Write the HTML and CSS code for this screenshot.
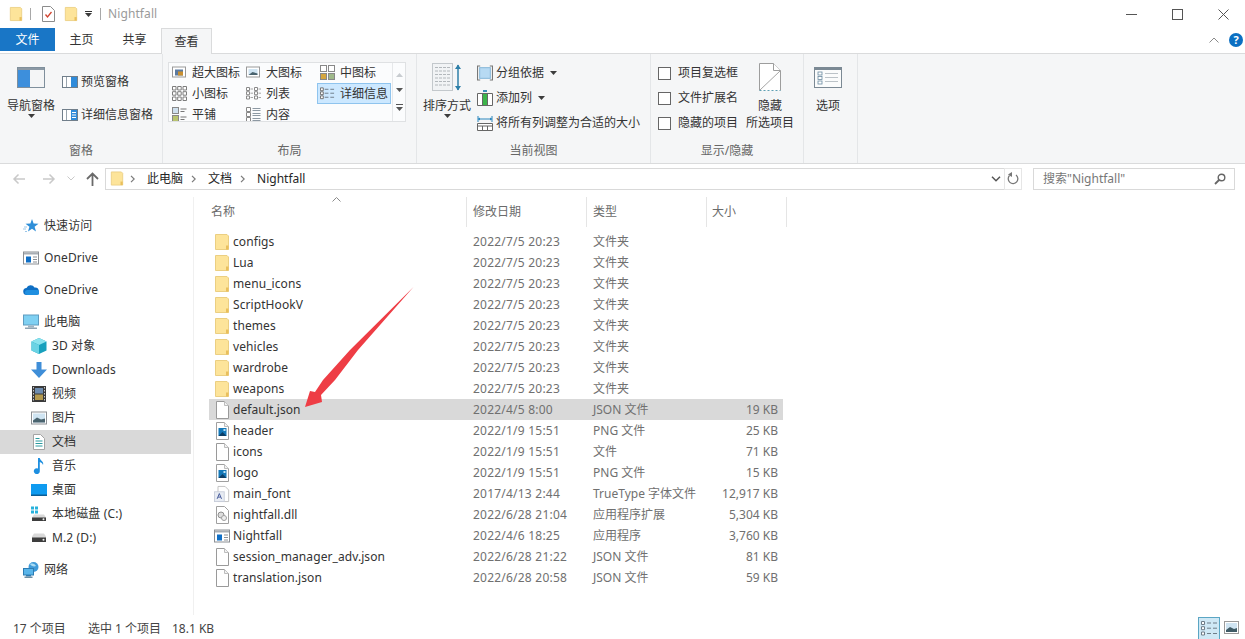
FILE: index.html
```html
<!DOCTYPE html>
<html lang="zh-CN">
<head>
<meta charset="utf-8">
<title>Nightfall</title>
<link rel="stylesheet" href="styles.css">
</head>
<body>
<svg class="defs" width="0" height="0" aria-hidden="true">
  <symbol id="folder" viewBox="0 0 16 18"><path d="M1.500 1.500h11.500l1.500 1.500v13.500h-13z" fill="#fde49a" stroke="#ebcf82"/><path d="M12 12.500h2.500v4H12z" fill="#e9bf5c"/></symbol>
  <symbol id="file" viewBox="0 0 16 18"><path d="M2.500.5h8l4 4v13h-12z" fill="#fff" stroke="#9a9a9a"/><path d="M10.500.5v4h4" fill="#f2f2f2" stroke="#bdbdbd"/></symbol>
  <symbol id="png" viewBox="0 0 16 18"><path d="M2.500.5h8l4 4v13h-12z" fill="#fff" stroke="#a0a0a0"/><path d="M10.500.5v4h4" fill="#f2f2f2" stroke="#bdbdbd"/><rect x="4.500" y="6" width="8" height="8" fill="#1478b8"/><path d="M4.500 14l4-4 4 4z" fill="#0d3e66"/><rect x="9.500" y="7" width="2" height="2" fill="#bfe3f5"/></symbol>
  <symbol id="font" viewBox="0 0 18 18"><path d="M4.500.5h8l4 4v13h-12z" fill="#fff" stroke="#bcbcbc"/><rect x=".5" y="6.500" width="11" height="11" fill="#e8ecf3" stroke="#c6ccd8"/><path d="M3.500 14.500l2.500-6 2.500 6M4.500 12.500h3" fill="none" stroke="#3a4f94"/></symbol>
  <symbol id="dll" viewBox="0 0 16 18"><path d="M2.500.5h8l4 4v13h-12z" fill="#fff" stroke="#a0a0a0"/><circle cx="7" cy="9" r="3" fill="#ddd" stroke="#8f8f8f"/><circle cx="10" cy="12" r="2.500" fill="#eee" stroke="#9f9f9f"/></symbol>
  <symbol id="app" viewBox="0 0 16 13"><rect x=".5" y=".5" width="15" height="12" fill="#fff" stroke="#8b8f94"/><rect x="1" y="1" width="14" height="2" fill="#a8adb3"/><rect x="3" y="5" width="5" height="6" fill="#0f6fc6"/><path d="M10 5.500h4M10 8h4M10 10.500h4" stroke="#8b8f94"/></symbol>
  <symbol id="star" viewBox="0 0 16 16"><path d="M9 1l1.600 4.600 4.900.1-3.900 3 1.400 4.800L9 10.700l-4 2.800 1.400-4.800-3.900-3 4.900-.1z" fill="#2f8fd8"/><path d="M1 9h3M0 11h3M2 13.500h2" stroke="#9bc7e8"/></symbol>
  <symbol id="cloud" viewBox="0 0 16 11"><path d="M4 10.500a3.500 3.500 0 0 1-.5-7A4.500 4.500 0 0 1 11.500 3a3.700 3.700 0 0 1 1 7.500z" fill="#0e6fc4"/><path d="M4 10.500a2.500 2.500 0 0 1 1-5h9a2.500 2.500 0 0 1 0 5z" fill="#1f8fe0"/></symbol>
  <symbol id="pc" viewBox="0 0 16 15"><rect x=".5" y=".5" width="15" height="10" fill="#7fd0f2" stroke="#5f9cc0"/><rect x="5" y="11" width="6" height="2" fill="#9fb4c2"/><rect x="2" y="13" width="12" height="1.500" fill="#8ea3b2"/></symbol>
  <symbol id="cube" viewBox="0 0 16 16"><path d="M8 0l7.500 3.500v9L8 16 .5 12.500v-9z" fill="#17a0bd"/><path d="M8 0l7.500 3.500L8 7 .5 3.500z" fill="#8be3ee"/><path d="M.5 3.500L8 7v9L.5 12.500z" fill="#6bd3e4"/></symbol>
  <symbol id="down" viewBox="0 0 16 16"><path d="M5.500 0h5v7.500H16L8 16 0 7.500h5.500z" fill="#3f8ed8"/></symbol>
  <symbol id="film" viewBox="0 0 16 16"><rect x="1" y="0" width="14" height="16" fill="#3a3a3a"/><rect x="4" y="2" width="8" height="5.500" fill="#6e8db0"/><rect x="4" y="8.500" width="8" height="5.500" fill="#b49a4e"/><path d="M2.500 1v14M13.500 1v14" stroke="#ccc" stroke-dasharray="1.500 1.500"/></symbol>
  <symbol id="pic" viewBox="0 0 16 13"><rect x=".5" y=".5" width="15" height="12" fill="#fff" stroke="#8b8f94"/><rect x="2" y="2" width="12" height="9" fill="#cfe4f2"/><path d="M2 9l4-3 4 2 4-1v4H2z" fill="#49636e"/></symbol>
  <symbol id="doc" viewBox="0 0 14 16"><path d="M1.500.5h7l4 4v11h-11z" fill="#fff" stroke="#a4a4a4"/><path d="M3.500 4.500h4M3.500 7h7M3.500 9.500h7M3.500 12h7" stroke="#2b9a9f"/></symbol>
  <symbol id="note" viewBox="0 0 14 16"><path d="M6 0h1.800c.4 2.600 4.400 3.400 3.200 7-.6-1.700-1.800-2.600-3.200-3v9a3 3 0 1 1-1.800-2.600z" fill="#1e8fe0"/></symbol>
  <symbol id="desk" viewBox="0 0 16 12"><rect x="0" y="0" width="16" height="11" fill="#0f9bf0"/><rect x="0" y="10.500" width="16" height="1.500" fill="#0b5e96"/></symbol>
  <symbol id="drivec" viewBox="0 0 16 15"><path d="M3 8h10l2 3v3H1v-3z" fill="#d9d9d9"/><rect x="1" y="11" width="14" height="3.500" fill="#3d3d3d"/><circle cx="12.500" cy="12.700" r="1" fill="#eee"/><rect x="0" y="0" width="3" height="3" fill="#28b2dc"/><rect x="4" y="0" width="3" height="3" fill="#28b2dc"/><rect x="0" y="4" width="3" height="3" fill="#28b2dc"/><rect x="4" y="4" width="3" height="3" fill="#28b2dc"/></symbol>
  <symbol id="drive" viewBox="0 0 16 9"><path d="M3 0h10l2 3v5H1V3z" fill="#d9d9d9"/><rect x="1" y="4" width="14" height="4.500" fill="#3d3d3d"/><circle cx="12.500" cy="6.200" r="1" fill="#eee"/></symbol>
  <symbol id="net" viewBox="0 0 16 16"><circle cx="10.500" cy="5" r="5" fill="#3f9ad8"/><path d="M7 2c3-1 5 0 6 2-2 1-5 0-6-2z" fill="#a9dcf4"/><rect x=".5" y="6.500" width="10" height="6.500" fill="#59b5ea" stroke="#2d7cb3"/><rect x="3" y="13" width="5" height="1.500" fill="#2d7cb3"/><rect x="1.500" y="14.500" width="8" height="1.500" fill="#6d8ea3"/></symbol>
  <symbol id="navpane" viewBox="0 0 28 21"><rect x=".5" y=".5" width="27" height="20" fill="#f4f5f6" stroke="#7f8f9c"/><rect x="1" y="1" width="26" height="2" fill="#8b99a5"/><rect x="1" y="3" width="12" height="17" fill="#3d8fdc"/></symbol>
  <symbol id="prevpane" viewBox="0 0 16 12"><rect x=".5" y=".5" width="15" height="11" fill="#fff" stroke="#707e8a"/><rect x="9" y="1" width="6" height="10" fill="#2f8bda"/><path d="M4.500 1v10" stroke="#9aa5ae"/></symbol>
  <symbol id="detpane" viewBox="0 0 16 12"><rect x=".5" y=".5" width="15" height="11" fill="#fff" stroke="#707e8a"/><rect x="9" y="1" width="6" height="10" fill="#2f8bda"/><path d="M10 3.500h4M10 6h4M10 8.500h4" stroke="#fff"/><path d="M4.500 1v10" stroke="#9aa5ae"/></symbol>
  <symbol id="g-xl" viewBox="0 0 15 12"><rect x=".5" y=".5" width="13" height="10" fill="#fff" stroke="#999"/><rect x="3" y="3" width="8" height="6" fill="#5b7aa0"/><rect x="6" y="5" width="5" height="4" fill="#c98f2f"/></symbol>
  <symbol id="g-l" viewBox="0 0 15 12"><rect x=".5" y=".5" width="13" height="10" fill="#fff" stroke="#999"/><rect x="2.500" y="2.500" width="9" height="6" fill="#cfe4f2"/><path d="M2.500 8.500l4-3 5 1.500v1.500z" fill="#49636e"/></symbol>
  <symbol id="g-m" viewBox="0 0 15 15"><rect x=".5" y=".5" width="6" height="6" fill="#fff" stroke="#888"/><rect x="8.500" y=".5" width="6" height="6" fill="#fff" stroke="#888"/><rect x=".5" y="8.500" width="6" height="6" fill="#d5a63f" stroke="#888"/><rect x="8.500" y="8.500" width="6" height="6" fill="#9fb98a" stroke="#888"/></symbol>
  <symbol id="g-s" viewBox="0 0 15 15"><path d="M.5.500h3.500v3.500h-3.500zM5.700.500h3.500v3.500h-3.500zM11 .500h3.500v3.500H11zM.5 5.700h3.500v3.500h-3.500zM5.700 5.700h3.500v3.500h-3.500zM11 5.700h3.500v3.500H11zM.5 11h3.500v3.500h-3.500zM5.700 11h3.500v3.500h-3.500zM11 11h3.500v3.500H11z" fill="#fff" stroke="#7d7d7d"/></symbol>
  <symbol id="g-list" viewBox="0 0 15 13"><path d="M.5.500h3v3h-3zM.5 4.700h3v3h-3zM.5 9h3v3h-3zM8.500.500h3v3h-3zM8.500 4.700h3v3h-3zM8.500 9h3v3h-3z" fill="#fff" stroke="#8a8a8a"/><path d="M4.500 2h2.500M4.500 6.200h2.500M4.500 10.500h2.500M12.500 2H15M12.500 6.200H15M12.500 10.500H15" stroke="#a5a5a5"/></symbol>
  <symbol id="g-det" viewBox="0 0 16 13"><path d="M.5.500h3v3h-3zM.5 4.700h3v3h-3zM.5 9h3v3h-3z" fill="#fff" stroke="#6c6c6c"/><path d="M5 2h4M11 2h4M5 6.200h4M11 6.200h4M5 10.500h4M11 10.500h4" stroke="#6c7a86"/></symbol>
  <symbol id="g-tile" viewBox="0 0 15 15"><rect x=".5" y=".5" width="6" height="6" fill="#cfe0ee" stroke="#888"/><rect x=".5" y="8.500" width="6" height="6" fill="#b9c46f" stroke="#888"/><path d="M8.500 2h6M8.500 4.500h4M8.500 10h6M8.500 12.500h4" stroke="#777"/></symbol>
  <symbol id="g-cont" viewBox="0 0 15 15"><path d="M.5.500h4v4h-4zM.5 5.500h4v4h-4zM.5 10.500h4v4h-4z" fill="#fff" stroke="#888"/><path d="M6.500 1.500h8M6.500 3.500h8M6.500 6.500h8M6.500 8.500h8M6.500 11.500h8M6.500 13.500h8" stroke="#8d99a3"/></symbol>
  <symbol id="sort" viewBox="0 0 30 29"><rect x=".5" y=".5" width="20" height="27" fill="#f1f3f5" stroke="#c3c8cc"/><path d="M3 4.500h15M3 8h15M3 11.500h15M3 15h15M3 18.500h15M3 22h15" stroke="#b3b8bc" stroke-dasharray="3 1"/><path d="M26 2v25" stroke="#2e7fa8" stroke-width="1.500"/><path d="M23 6l3-4.500L29 6zM23 23l3 4.500 3-4.500z" fill="#2e7fa8"/></symbol>
  <symbol id="group" viewBox="0 0 15 14"><path d="M3 .5H.5v13H3M12 .5h2.500v13H12" fill="none" stroke="#777"/><rect x="2.500" y="2" width="10" height="10" fill="#b7daf3" stroke="#8ab9da"/></symbol>
  <symbol id="addcol" viewBox="0 0 16 16"><path d="M.5 3.500h15v12H.5z" fill="#fff" stroke="#666"/><rect x="6" y="4" width="4" height="11" fill="#3cb44a"/><path d="M5.500 3.500v12M10.500 3.500v12" stroke="#666"/><path d="M6 0h4v2H6z" fill="#3a8fb7"/></symbol>
  <symbol id="fit" viewBox="0 0 16 16"><path d="M.5 8.500h15v7H.5zM.5 11h15M5.500 11v4.500M10.500 11v4.500" fill="#fff" stroke="#666"/><path d="M1 4h14M1 1v6M15 1v6" fill="none" stroke="#2a86bd"/><path d="M3 2.500v3L1 4zM13 2.500v3L15 4z" fill="#2a86bd"/></symbol>
  <symbol id="hide" viewBox="0 0 22 29"><path d="M.5 27.500V.5h14l7 7v20" fill="#fff" stroke="#9d9d9d"/><path d="M14.500.5v7h7" fill="#fff" stroke="#9d9d9d"/><path d="M.5 27.500h21" stroke="#5f9fb3" stroke-dasharray="2 2"/><path d="M1 27l20-19" stroke="#a5a5a5"/></symbol>
  <symbol id="opts" viewBox="0 0 28 21"><rect x=".5" y=".5" width="27" height="20" fill="#fbfcfc" stroke="#7b8994"/><rect x="1" y="1" width="26" height="2" fill="#7b8994"/><path d="M11 6.500h13M11 10.500h13M11 14.500h13" stroke="#bcc3c8"/><rect x="4" y="5" width="4" height="3" fill="#fff" stroke="#6a8aa0" stroke-width=".8"/><rect x="4" y="9.500" width="4" height="3" fill="#fff" stroke="#6a8aa0" stroke-width=".8"/><rect x="4" y="14" width="4" height="3" fill="#fff" stroke="#6a8aa0" stroke-width=".8"/></symbol>
  <symbol id="qdoc" viewBox="0 0 13 16"><path d="M.5.500h8l4 4v11H.5z" fill="#fff" stroke="#8c8c8c"/><path d="M3.500 8.500l2 2.500 4-5" fill="none" stroke="#d1432f" stroke-width="1.300"/></symbol>
  <symbol id="caret" viewBox="0 0 7 4"><path d="M0 0h7L3.500 4z" fill="#3c3c3c"/></symbol>
  <symbol id="chev" viewBox="0 0 5 8"><path d="M1 .8L4.200 4 1 7.200" fill="none" stroke="#7a7a7a" stroke-width="1.200"/></symbol>
  <symbol id="bars" viewBox="0 0 16 16"><path d="M.5.500h3v3h-3zM.5 5.700h3v3h-3zM.5 11h3v3h-3z" fill="#fff" stroke="#6f7d88"/><path d="M6 2h4M12 2h4M6 7.200h4M12 7.200h4M6 12.500h4M12 12.500h4" stroke="#6f7d88"/></symbol>
  <symbol id="thumb" viewBox="0 0 15 13"><rect x=".5" y=".5" width="14" height="12" fill="#fff" stroke="#9a9a9a"/><rect x="2" y="2" width="11" height="9" fill="#cfe4f2"/><path d="M2 9l4-3 4 2 3-1v4H2z" fill="#3f5b66"/></symbol>
</svg>

<div class="app">
  <header class="titlebar">
    <svg class="q-folder"><use href="#folder"/></svg>
    <span class="q-sep"></span>
    <svg class="q-doc"><use href="#qdoc"/></svg>
    <svg class="q-folder"><use href="#folder"/></svg>
    <span class="q-more"><span class="q-line"></span><svg class="caret"><use href="#caret"/></svg></span>
    <span class="q-sep q-sep-2"></span>
    <span class="win-title">Nightfall</span>
    <div class="win-btns">
      <svg class="win-btn" viewBox="0 0 11 11"><path d="M0 5.500h11" stroke="#555"/></svg>
      <svg class="win-btn" viewBox="0 0 11 11"><rect x=".5" y=".5" width="10" height="10" fill="none" stroke="#555"/></svg>
      <svg class="win-btn" viewBox="0 0 11 11"><path d="M.5.500l10 10M10.500.500l-10 10" stroke="#555"/></svg>
    </div>
  </header>

  <nav class="tabs">
    <span class="tab tab-file">文件</span>
    <span class="tab">主页</span>
    <span class="tab">共享</span>
    <span class="tab tab-active">查看</span>
    <span class="tabs-right">
      <svg class="tab-chev" viewBox="0 0 10 6"><path d="M.5 5.500L5 1l4.500 4.500" fill="none" stroke="#8a8a8a"/></svg>
      <span class="help">?</span>
    </span>
  </nav>

  <section class="ribbon">
    <div class="group g-pane">
      <div class="g-body">
        <div class="big big-nav">
          <div class="big-top"><svg class="i-nav"><use href="#navpane"/></svg></div>
          <span class="big-label">导航窗格</span>
          <svg class="caret"><use href="#caret"/></svg>
        </div>
        <div class="small-col pane-col">
          <div class="small"><svg class="i-16"><use href="#prevpane"/></svg>预览窗格</div>
          <div class="small"><svg class="i-16"><use href="#detpane"/></svg>详细信息窗格</div>
        </div>
      </div>
      <div class="g-label">窗格</div>
    </div>

    <div class="group g-layout">
      <div class="g-body">
        <div class="gallery">
          <div class="gal-grid">
            <div class="gal-item"><svg class="i-15"><use href="#g-xl"/></svg>超大图标</div>
            <div class="gal-item"><svg class="i-15"><use href="#g-l"/></svg>大图标</div>
            <div class="gal-item"><svg class="i-15"><use href="#g-m"/></svg>中图标</div>
            <div class="gal-item"><svg class="i-15"><use href="#g-s"/></svg>小图标</div>
            <div class="gal-item"><svg class="i-15"><use href="#g-list"/></svg>列表</div>
            <div class="gal-item gal-sel"><svg class="i-15"><use href="#g-det"/></svg>详细信息</div>
            <div class="gal-item"><svg class="i-15"><use href="#g-tile"/></svg>平铺</div>
            <div class="gal-item"><svg class="i-15"><use href="#g-cont"/></svg>内容</div>
          </div>
          <div class="gal-scroll">
            <svg class="gal-arrow" viewBox="0 0 7 4"><path d="M0 4h7L3.500 0z" fill="#c8ccd0"/></svg>
            <svg class="gal-arrow" viewBox="0 0 7 4"><path d="M0 0h7L3.500 4z" fill="#555"/></svg>
            <svg class="gal-arrow gal-arrow-more" viewBox="0 0 7 7"><path d="M0 .5h7" stroke="#555"/><path d="M0 3h7L3.500 7z" fill="#555"/></svg>
          </div>
        </div>
      </div>
      <div class="g-label">布局</div>
    </div>

    <div class="group g-view">
      <div class="g-body">
        <div class="big big-sort">
          <div class="big-top"><svg class="i-sort"><use href="#sort"/></svg></div>
          <span class="big-label">排序方式</span>
          <svg class="caret"><use href="#caret"/></svg>
        </div>
        <div class="small-col view-col">
          <div class="small"><svg class="i-16"><use href="#group"/></svg>分组依据<svg class="caret caret-in"><use href="#caret"/></svg></div>
          <div class="small"><svg class="i-16"><use href="#addcol"/></svg>添加列<svg class="caret caret-in"><use href="#caret"/></svg></div>
          <div class="small"><svg class="i-16"><use href="#fit"/></svg>将所有列调整为合适的大小</div>
        </div>
      </div>
      <div class="g-label">当前视图</div>
    </div>

    <div class="group g-show">
      <div class="g-body">
        <div class="small-col check-col">
          <label class="check"><span class="box"></span>项目复选框</label>
          <label class="check"><span class="box"></span>文件扩展名</label>
          <label class="check"><span class="box"></span>隐藏的项目</label>
        </div>
        <div class="big big-hide">
          <div class="big-top"><svg class="i-hide"><use href="#hide"/></svg></div>
          <span class="big-label">隐藏</span>
          <span class="big-label">所选项目</span>
        </div>
      </div>
      <div class="g-label">显示/隐藏</div>
    </div>

    <div class="group g-opt">
      <div class="g-body">
        <div class="big big-opt">
          <div class="big-top"><svg class="i-nav"><use href="#opts"/></svg></div>
          <span class="big-label">选项</span>
        </div>
      </div>
    </div>
  </section>

  <section class="addr-row">
    <svg class="nav-arrow" viewBox="0 0 14 12"><path d="M13 6H2M6.500 1.500L2 6l4.500 4.500" fill="none" stroke="#c9c9c9" stroke-width="1.500"/></svg>
    <svg class="nav-arrow nav-fwd" viewBox="0 0 14 12"><path d="M1 6h11M7.500 1.500L12 6l-4.500 4.500" fill="none" stroke="#c9c9c9" stroke-width="1.500"/></svg>
    <svg class="nav-recent" viewBox="0 0 8 5"><path d="M.5.500L4 4 7.500.500" fill="none" stroke="#c9c9c9"/></svg>
    <svg class="nav-up" viewBox="0 0 13 14"><path d="M6.500 14V2M1 7l5.500-5.500L12 7" fill="none" stroke="#6a6a6a" stroke-width="1.800"/></svg>
    <div class="addr-box">
      <svg class="addr-folder"><use href="#folder"/></svg>
      <svg class="crumb-sep"><use href="#chev"/></svg><span class="crumb">此电脑</span>
      <svg class="crumb-sep"><use href="#chev"/></svg><span class="crumb">文档</span>
      <svg class="crumb-sep"><use href="#chev"/></svg><span class="crumb">Nightfall</span>
      <svg class="addr-down" viewBox="0 0 10 6"><path d="M1 .8L5 4.800 9 .8" fill="none" stroke="#555" stroke-width="1.500"/></svg>
    </div>
    <div class="refresh">
      <svg class="refresh-ic" viewBox="0 0 12 13"><path d="M3 3a4.800 4.800 0 1 0 6.500.5" transform="matrix(-1 0 0 1 12 0)" fill="none" stroke="#777" stroke-width="1.300"/><path d="M5 0v5L1 2.500z" fill="#777"/></svg>
    </div>
    <div class="search">
      <span>搜索"Nightfall"</span>
      <svg class="search-ic" viewBox="0 0 12 12"><circle cx="7.500" cy="4.500" r="3.300" fill="none" stroke="#666" stroke-width="1.400"/><path d="M5 7l-4 4" stroke="#666" stroke-width="1.800"/></svg>
    </div>
  </section>

  <main class="main">
    <aside class="tree">
      <div class="t-item t-1"><svg class="i-16"><use href="#star"/></svg>快速访问</div>
      <div class="t-item t-1 t-gap"><svg class="i-16"><use href="#app"/></svg>OneDrive</div>
      <div class="t-item t-1 t-gap"><svg class="i-16"><use href="#cloud"/></svg>OneDrive</div>
      <div class="t-item t-1 t-gap"><svg class="i-16"><use href="#pc"/></svg>此电脑</div>
      <div class="t-item t-2"><svg class="i-16"><use href="#cube"/></svg>3D 对象</div>
      <div class="t-item t-2"><svg class="i-16"><use href="#down"/></svg>Downloads</div>
      <div class="t-item t-2"><svg class="i-16"><use href="#film"/></svg>视频</div>
      <div class="t-item t-2"><svg class="i-16"><use href="#pic"/></svg>图片</div>
      <div class="t-item t-2 t-sel"><svg class="i-16"><use href="#doc"/></svg>文档</div>
      <div class="t-item t-2"><svg class="i-16"><use href="#note"/></svg>音乐</div>
      <div class="t-item t-2"><svg class="i-16"><use href="#desk"/></svg>桌面</div>
      <div class="t-item t-2"><svg class="i-16"><use href="#drivec"/></svg>本地磁盘 (C:)</div>
      <div class="t-item t-2"><svg class="i-16"><use href="#drive"/></svg>M.2 (D:)</div>
      <div class="t-item t-1 t-gap"><svg class="i-16"><use href="#net"/></svg>网络</div>
    </aside>

    <div class="files">
      <div class="f-head">
        <span class="h-name">名称</span>
        <span class="h-date">修改日期</span>
        <span class="h-type">类型</span>
        <span class="h-size">大小</span>
      </div>
      <div class="row"><span class="name"><svg class="i-16"><use href="#folder"/></svg>configs</span><span class="date">2022/7/5 20:23</span><span class="type">文件夹</span><span class="size"></span></div>
      <div class="row"><span class="name"><svg class="i-16"><use href="#folder"/></svg>Lua</span><span class="date">2022/7/5 20:23</span><span class="type">文件夹</span><span class="size"></span></div>
      <div class="row"><span class="name"><svg class="i-16"><use href="#folder"/></svg>menu_icons</span><span class="date">2022/7/5 20:23</span><span class="type">文件夹</span><span class="size"></span></div>
      <div class="row"><span class="name"><svg class="i-16"><use href="#folder"/></svg>ScriptHookV</span><span class="date">2022/7/5 20:23</span><span class="type">文件夹</span><span class="size"></span></div>
      <div class="row"><span class="name"><svg class="i-16"><use href="#folder"/></svg>themes</span><span class="date">2022/7/5 20:23</span><span class="type">文件夹</span><span class="size"></span></div>
      <div class="row"><span class="name"><svg class="i-16"><use href="#folder"/></svg>vehicles</span><span class="date">2022/7/5 20:23</span><span class="type">文件夹</span><span class="size"></span></div>
      <div class="row"><span class="name"><svg class="i-16"><use href="#folder"/></svg>wardrobe</span><span class="date">2022/7/5 20:23</span><span class="type">文件夹</span><span class="size"></span></div>
      <div class="row"><span class="name"><svg class="i-16"><use href="#folder"/></svg>weapons</span><span class="date">2022/7/5 20:23</span><span class="type">文件夹</span><span class="size"></span></div>
      <div class="row row-sel"><span class="name"><svg class="i-16"><use href="#file"/></svg>default.json</span><span class="date">2022/4/5 8:00</span><span class="type">JSON 文件</span><span class="size">19 KB</span></div>
      <div class="row"><span class="name"><svg class="i-16"><use href="#png"/></svg>header</span><span class="date">2022/1/9 15:51</span><span class="type">PNG 文件</span><span class="size">25 KB</span></div>
      <div class="row"><span class="name"><svg class="i-16"><use href="#file"/></svg>icons</span><span class="date">2022/1/9 15:51</span><span class="type">文件</span><span class="size">71 KB</span></div>
      <div class="row"><span class="name"><svg class="i-16"><use href="#png"/></svg>logo</span><span class="date">2022/1/9 15:51</span><span class="type">PNG 文件</span><span class="size">15 KB</span></div>
      <div class="row"><span class="name"><svg class="i-16"><use href="#font"/></svg>main_font</span><span class="date">2017/4/13 2:44</span><span class="type">TrueType 字体文件</span><span class="size">12,917 KB</span></div>
      <div class="row"><span class="name"><svg class="i-16"><use href="#dll"/></svg>nightfall.dll</span><span class="date">2022/6/28 21:04</span><span class="type">应用程序扩展</span><span class="size">5,304 KB</span></div>
      <div class="row"><span class="name"><svg class="i-16"><use href="#app"/></svg>Nightfall</span><span class="date">2022/4/6 18:25</span><span class="type">应用程序</span><span class="size">3,760 KB</span></div>
      <div class="row"><span class="name"><svg class="i-16"><use href="#file"/></svg>session_manager_adv.json</span><span class="date">2022/6/28 21:22</span><span class="type">JSON 文件</span><span class="size">81 KB</span></div>
      <div class="row"><span class="name"><svg class="i-16"><use href="#file"/></svg>translation.json</span><span class="date">2022/6/28 20:58</span><span class="type">JSON 文件</span><span class="size">59 KB</span></div>
    </div>
  </main>

  <footer class="status">
    <span class="s-count">17 个项目</span>
    <span class="s-sel">选中 1 个项目</span>
    <span>18.1 KB</span>
    <span class="s-views">
      <span class="s-view-on"><svg class="i-16"><use href="#bars"/></svg></span>
      <svg class="i-15"><use href="#thumb"/></svg>
    </span>
  </footer>

  <svg class="sort-mark" viewBox="0 0 9 5"><path d="M.5 4.500L4.500.5l4 4" fill="none" stroke="#8a8a8a"/></svg>
  <svg class="red-arrow" viewBox="0 0 110 122"><path d="M109.500 0L54 63 31 93 17 108l1 7-17 5 5-16 5 1 8-12 27-30z" fill="#ee3d45"/></svg>
</div>
</body>
</html>
```

FILE: styles.css
```css
* { box-sizing: border-box; }
html, body { margin: 0; padding: 0; background: #fff; }
body { overflow: hidden; font: 12px/16px "Noto Sans", "Noto Sans CJK SC", sans-serif; color: #262626; }
.defs { position: absolute; }
svg { display: block; flex: none; }

.app { position: relative; width: 1245px; height: 639px; display: flex; flex-direction: column; overflow: hidden; }

/* title bar */
.titlebar { height: 28px; display: flex; align-items: center; padding-left: 9px; }
.q-folder { width: 14px; height: 16px; }
.q-sep { width: 1px; height: 12px; background: #a8a8a8; margin: 0 11px 0 7px; }
.q-doc { width: 13px; height: 16px; margin-right: 9px; }
.q-more { display: flex; flex-direction: column; gap: 1px; margin-left: 7px; width: 7px; }
.q-line { height: 1px; background: #333; }
.q-more .caret { width: 7px; height: 4px; }
.q-sep-2 { margin: 0 7px 0 8px; }
.win-title { color: #9a9a9a; letter-spacing: .1px; }
.win-btns { margin-left: auto; display: flex; gap: 35px; padding-right: 16px; }
.win-btn { width: 11px; height: 11px; }

/* tabs */
.tabs { height: 26px; display: flex; position: relative; border-bottom: 1px solid #dadbdc; }
.tab { width: 53px; height: 23px; text-align: center; line-height: 24px; color: #333; }
.tab-file { width: 55px; background: #1976c6; color: #fff; }
.tab-active { width: 51px; height: 26px; background: #f5f6f7; border: 1px solid #dadbdc; border-bottom: 0; line-height: 25px; margin-bottom: -1px; }
.tabs-right { margin-left: auto; display: flex; align-items: center; gap: 10px; padding: 0 2px 2px 0; height: 26px; }
.tab-chev { width: 10px; height: 6px; }
.help { width: 14px; height: 14px; border-radius: 50%; background: #0b6fc2; color: #fff; font-weight: 700; font-size: 11px; line-height: 14px; text-align: center; }

/* ribbon */
.ribbon { height: 110px; background: #f5f6f7; border-bottom: 1px solid #dadbdc; display: flex; color: #333; }
.group { display: flex; flex-direction: column; border-right: 1px solid #e4e6e8; }
.g-body { height: 87px; display: flex; }
.g-label { height: 20px; line-height: 19px; text-align: center; color: #666; }
.g-pane { width: 163px; }
.g-layout { width: 254px; }
.g-view { width: 234px; }
.g-show { width: 153px; }
.g-opt { width: 54px; }

.big { display: flex; flex-direction: column; align-items: center; }
.big-top { height: 43px; padding-top: 4px; display: flex; align-items: center; justify-content: center; }
.big-label { line-height: 17px; white-space: nowrap; }
.big .caret { width: 7px; height: 4px; }
.big-nav { width: 62px; }
.big-sort { width: 60px; }
.big-hide { width: 48px; }
.big-opt { width: 48px; }
.i-nav { width: 28px; height: 21px; }
.i-sort { width: 30px; height: 29px; }
.i-hide { width: 22px; height: 29px; }
.i-16 { width: 16px; height: 16px; }
.i-15 { width: 15px; height: 15px; }

.small-col { display: flex; flex-direction: column; }
.small { height: 20px; display: flex; align-items: center; gap: 3px; white-space: nowrap; }
.pane-col { padding-top: 18px; gap: 13px; }
.view-col { padding-top: 9px; gap: 5px; }
.caret { width: 7px; height: 4px; }
.caret-in { margin-left: 3px; }

.gallery { width: 238px; height: 60px; margin: 8px 0 0 5px; border: 1px solid #dfe1e3; background: #fbfcfd; display: flex; overflow: hidden; }
.gal-grid { width: 223px; padding-left: 2px; margin-top: -1px; display: grid; grid-template-columns: 74px 74px 73px; grid-auto-rows: 21px; }
.gal-item { display: flex; align-items: center; gap: 5px; padding-left: 1px; white-space: nowrap; height: 21px; }
.gal-sel { margin: 0 1px 0 -2px; padding-left: 2px; background: #cce8ff; border: 1px solid #8fc4ee; }
.gal-scroll { flex: 1; border-left: 1px solid #e6e8ea; display: flex; flex-direction: column; align-items: center; justify-content: space-around; padding: 4px 0; }
.gal-arrow { width: 7px; height: 4px; }
.gal-arrow-more { height: 7px; }

.check-col { padding: 9px 0 0 7px; gap: 5px; width: 95px; }
.check { height: 20px; display: flex; align-items: center; gap: 7px; white-space: nowrap; }
.box { width: 13px; height: 13px; background: #fff; border: 1px solid #666; }

/* address */
.addr-row { height: 33px; display: flex; align-items: center; padding: 0 10px 4px 12px; }
.nav-arrow { width: 14px; height: 12px; }
.nav-fwd { margin-left: 16px; }
.nav-recent { width: 8px; height: 5px; margin-left: 11px; }
.nav-up { width: 13px; height: 14px; margin-left: 11px; }
.addr-box { width: 900px; height: 22px; margin-left: 6px; border: 1px solid #d9d9d9; display: flex; align-items: center; padding-left: 4px; }
.addr-folder { width: 14px; height: 17px; margin-right: 6px; }
.crumb { margin-right: 8px; }
.crumb-sep { width: 5px; height: 8px; margin-right: 12px; }
.addr-down { width: 10px; height: 6px; margin-left: auto; margin-right: 3px; }
.refresh { width: 18px; height: 22px; margin-left: -1px; border: 1px solid #e6e6e6; display: flex; align-items: center; justify-content: center; }
.refresh-ic { width: 12px; height: 13px; }
.search { width: 202px; height: 22px; margin-left: 11px; border: 1px solid #d9d9d9; display: flex; align-items: center; justify-content: space-between; padding: 0 8px 0 9px; color: #777; }
.search-ic { width: 12px; height: 12px; }

/* main */
.main { flex: 1; min-height: 0; display: flex; }
.tree { width: 194px; padding-top: 17px; border-right: 1px solid #f0f0f0; }
.t-item { height: 24px; width: 191px; display: flex; align-items: center; gap: 5px; white-space: nowrap; color: #333; letter-spacing: .12px; }
.t-1 { padding-left: 23px; }
.t-2 { padding-left: 31px; }
.t-gap { margin-top: 8px; }
.t-sel { background: #d9d9d9; }

.files { flex: 1; padding-left: 15px; }
.f-head { width: 578px; height: 28px; margin-bottom: 6px; display: grid; grid-template-columns: 258px 120px 120px 80px; color: #6b6b6b; line-height: 30px; }
.f-head span { border-right: 1px solid #e5e5e5; }
.h-name { padding-left: 2px; }
.h-date, .h-type { padding-left: 6px; }
.h-size { padding-left: 5px; }

.row { width: 574px; height: 21px; display: grid; grid-template-columns: 258px 120px 120px 76px; align-items: center; color: #707070; white-space: nowrap; }
.name { display: flex; align-items: center; gap: 3px; padding-left: 5px; color: #333; letter-spacing: .08px; }
.name .i-16 { height: 18px; }
.date, .type { padding-left: 6px; }
.date { letter-spacing: .22px; }
.size { text-align: right; padding-right: 5px; }
.row-sel { background: #d9d9d9; }

/* status */
.status { height: 24px; display: flex; align-items: center; padding: 4px 0 0 13px; color: #444; }
.s-count { width: 75px; }
.s-sel { width: 84px; }
.s-views { margin-left: auto; display: flex; align-items: center; gap: 4px; padding-right: 6px; margin-top: -4px; }
.s-view-on { width: 22px; height: 22px; margin-top: 2px; background: #cfe8f5; border: 1px solid #5ba6c4; border-bottom: 0; display: flex; align-items: center; justify-content: center; }

/* overlays */
.sort-mark { position: absolute; left: 332px; top: 197px; width: 9px; height: 5px; }
.red-arrow { position: absolute; left: 304px; top: 287px; width: 110px; height: 122px; }
```
